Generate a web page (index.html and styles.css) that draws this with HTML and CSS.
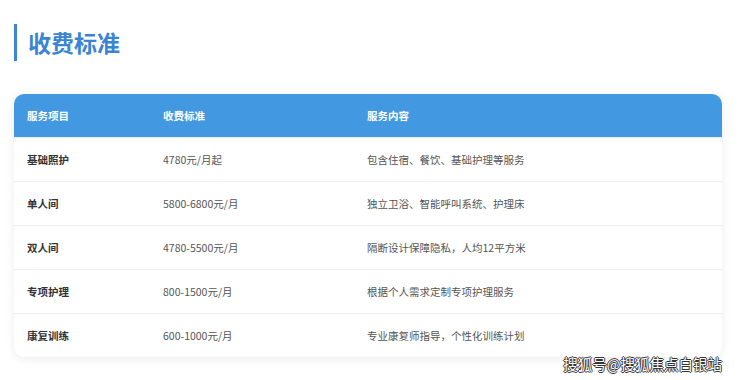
FILE: index.html
```html
<!DOCTYPE html>
<html lang="zh-CN">
<head>
  <meta charset="UTF-8">
  <title>收费标准</title>
  <link rel="stylesheet" href="styles.css">
</head>
<body>
  <div class="page">
    <h2 class="title">收费标准</h2>
    <div class="price-card">
      <div class="row head">
        <div>服务项目</div>
        <div>收费标准</div>
        <div>服务内容</div>
      </div>
      <div class="row">
        <div class="name">基础照护</div>
        <div>4780元/月起</div>
        <div>包含住宿、餐饮、基础护理等服务</div>
      </div>
      <div class="row">
        <div class="name">单人间</div>
        <div>5800-6800元/月</div>
        <div>独立卫浴、智能呼叫系统、护理床</div>
      </div>
      <div class="row">
        <div class="name">双人间</div>
        <div>4780-5500元/月</div>
        <div>隔断设计保障隐私，人均12平方米</div>
      </div>
      <div class="row">
        <div class="name">专项护理</div>
        <div>800-1500元/月</div>
        <div>根据个人需求定制专项护理服务</div>
      </div>
      <div class="row">
        <div class="name">康复训练</div>
        <div>600-1000元/月</div>
        <div>专业康复师指导，个性化训练计划</div>
      </div>
    </div>
    <div class="watermark">搜狐号@搜狐焦点白银站</div>
  </div>
</body>
</html>
```

FILE: styles.css
```css
html, body {
  margin: 0;
  background: #fff;
  font-family: "Noto Sans CJK SC", "Noto Sans", sans-serif;
  color: #444;
}
.page {
  position: relative;
  width: 740px;
  height: 380px;
  padding: 24px 18px 0 14px;
  box-sizing: border-box;
  overflow: hidden;
}
.title {
  margin: 0 0 33px;
  height: 37px;
  line-height: 37px;
  border-left: 3px solid #3b86d6;
  padding-left: 11px;
  font-size: 23px;
  font-weight: 700;
  color: #3b84d4;
}
.price-card {
  border-radius: 10px;
  overflow: hidden;
  background: #fff;
  box-shadow: 0 2px 10px rgba(0, 0, 0, 0.08);
}
.row {
  display: grid;
  grid-template-columns: 136px 204px 1fr;
  align-items: center;
  height: 44px;
  padding-left: 13px;
  font-size: 10.5px;
  color: #555;
  border-top: 1px solid #eceff3;
  box-sizing: border-box;
}
.row.head {
  height: 43px;
  border-top: none;
  background: #4299e1;
  color: #fff;
  font-weight: 700;
}
.row .name {
  font-weight: 700;
  color: #333;
}
.watermark {
  position: absolute;
  right: 18px;
  top: 353px;
  font-size: 14.5px;
  color: #fff;
  text-shadow: -1px 0 #333, 1px 0 #333, 0 -1px #333, 0 1px #333;
}
```
